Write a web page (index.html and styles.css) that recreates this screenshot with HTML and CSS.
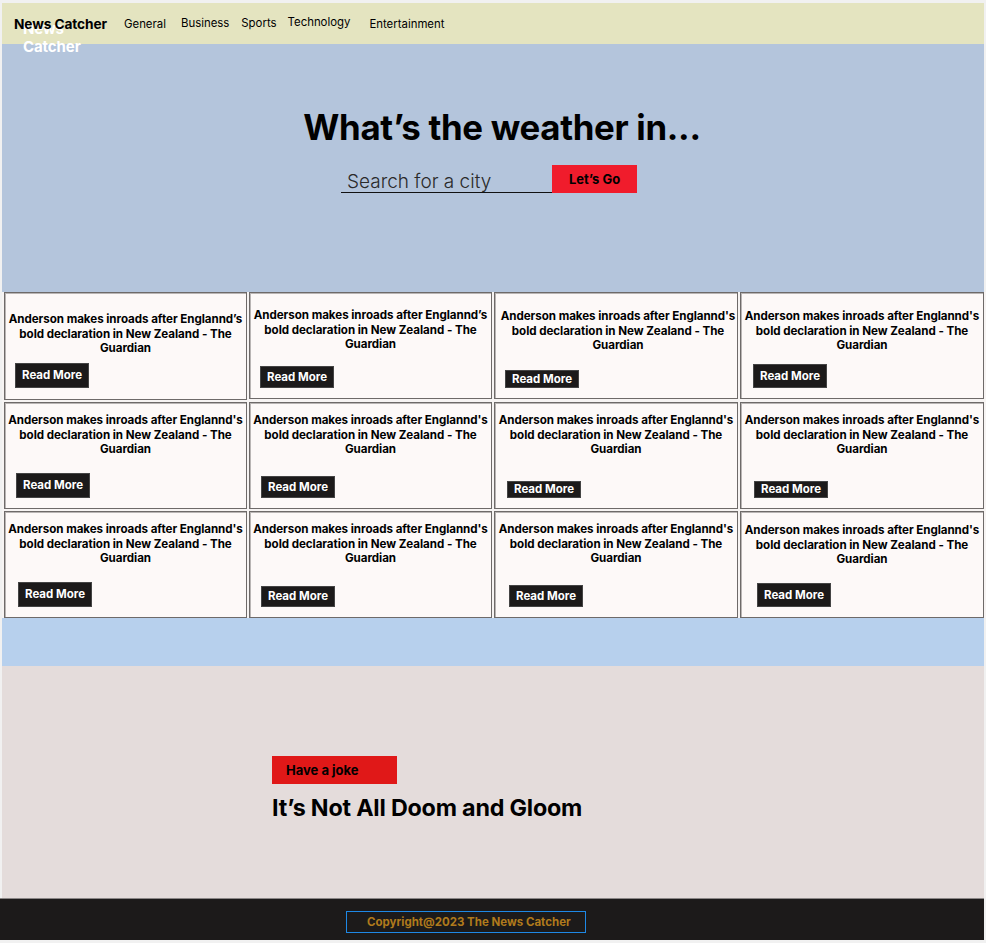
FILE: index.html
```html
<!DOCTYPE html>
<html lang="en">
<head>
<meta charset="utf-8">
<title>News Catcher</title>
<link rel="stylesheet" href="styles.css">
</head>
<body>
<div class="page">
  <header class="nav">
    <div class="brand">News Catcher<span class="brand-ghost">News<br>Catcher</span></div>
    <a class="link l-general">General</a>
    <a class="link l-business">Business</a>
    <a class="link l-sports">Sports</a>
    <a class="link l-tech">Technology</a>
    <a class="link l-ent">Entertainment</a>
  </header>

  <section class="hero">
    <h1 class="hero-title">What’s the weather in...</h1>
    <div class="search">
      <input class="search-input" type="text" placeholder="Search for a city">
      <button class="go-btn">Let’s Go</button>
    </div>
  </section>

  <section class="cards">
    <div class="card c1"><p class="card-title">Anderson makes inroads after Englannd’s bold declaration in New Zealand - The Guardian</p><button class="read">Read More</button></div>
    <div class="card c2"><p class="card-title">Anderson makes inroads after Englannd’s bold declaration in New Zealand - The Guardian</p><button class="read">Read More</button></div>
    <div class="card c3"><p class="card-title">Anderson makes inroads after Englannd's bold declaration in New Zealand - The Guardian</p><button class="read">Read More</button></div>
    <div class="card c4"><p class="card-title">Anderson makes inroads after Englannd's bold declaration in New Zealand - The Guardian</p><button class="read">Read More</button></div>

    <div class="card c5"><p class="card-title">Anderson makes inroads after Englannd's bold declaration in New Zealand - The Guardian</p><button class="read">Read More</button></div>
    <div class="card c6"><p class="card-title">Anderson makes inroads after Englannd's bold declaration in New Zealand - The Guardian</p><button class="read">Read More</button></div>
    <div class="card c7"><p class="card-title">Anderson makes inroads after Englannd's bold declaration in New Zealand - The Guardian</p><button class="read">Read More</button></div>
    <div class="card c8"><p class="card-title">Anderson makes inroads after Englannd's bold declaration in New Zealand - The Guardian</p><button class="read">Read More</button></div>

    <div class="card c9"><p class="card-title">Anderson makes inroads after Englannd's bold declaration in New Zealand - The Guardian</p><button class="read">Read More</button></div>
    <div class="card c10"><p class="card-title">Anderson makes inroads after Englannd's bold declaration in New Zealand - The Guardian</p><button class="read">Read More</button></div>
    <div class="card c11"><p class="card-title">Anderson makes inroads after Englannd's bold declaration in New Zealand - The Guardian</p><button class="read">Read More</button></div>
    <div class="card c12"><p class="card-title">Anderson makes inroads after Englannd's bold declaration in New Zealand - The Guardian</p><button class="read">Read More</button></div>
  </section>

  <div class="band"></div>

  <section class="joke">
    <div class="joke-inner">
      <button class="joke-btn">Have a joke</button>
      <h2 class="joke-title">It’s Not All Doom and Gloom</h2>
    </div>
  </section>

  <footer class="footer">
    <div class="copy">Copyright@2023 The News Catcher</div>
  </footer>
</div>
</body>
</html>
```

FILE: styles.css
```css
* { box-sizing: border-box; }

html, body {
  margin: 0;
  padding: 0;
  background: #f1f1f1;
}

body {
  padding: 3px 2px 0 2px;
  font-family: Inter, "Noto Sans", sans-serif;
  color: #000;
}

.page {
  width: 982px;
  display: flex;
  flex-direction: column;
}

/* NAV */
.nav {
  height: 41px;
  background: #e4e4c0;
  display: flex;
  align-items: center;
  position: relative;
  z-index: 2;
  padding-left: 12px;
}

.brand {
  position: relative;
  font-weight: 700;
  font-size: 13.7px;
  letter-spacing: -0.1px;
  margin-right: 17px;
  z-index: 1;
}

.brand-ghost {
  position: absolute;
  left: 9px;
  top: 4px;
  color: #fff;
  font-size: 15px;
  line-height: 18px;
  font-weight: 700;
  z-index: -1;
  white-space: nowrap;
}

.link {
  font-size: 11.4px;
  color: #000;
  text-decoration: none;
  display: inline-block;
}

.l-general { margin-right: 15px; margin-top: 1px; }
.l-business { margin-right: 12px; margin-top: -1px; }
.l-sports { margin-right: 11px; margin-top: -1px; }
.l-tech { margin-right: 19px; margin-top: -3px; }
.l-ent { margin-top: 1px; }

/* HERO */
.hero {
  height: 248px;
  background: #b4c5dc;
  display: flex;
  flex-direction: column;
  align-items: center;
  padding-top: 62px;
}

.hero-title {
  margin: 0 0 0 18px;
  font-size: 34.8px;
  font-weight: 700;
  letter-spacing: -0.3px;
  line-height: 42px;
}

.search {
  display: flex;
  align-items: flex-end;
  margin-top: 17px;
  margin-left: -8px;
}

.search-input {
  width: 211px;
  height: 28px;
  border: none;
  border-bottom: 1px solid #111;
  background: transparent;
  font-family: Inter, sans-serif;
  font-weight: 300;
  font-size: 19px;
  padding: 5px 0 0 6px;
  outline: none;
  line-height: 22px;
}

.search-input::placeholder {
  color: #2a2a2a;
  opacity: 1;
}

.go-btn {
  width: 85px;
  height: 28px;
  background: #f01c2c;
  border: none;
  font-family: Inter, sans-serif;
  font-weight: 700;
  font-size: 13px;
  color: #000;
  padding: 0;
}

/* CARDS */
.cards {
  display: grid;
  grid-template-columns: 243px 243px 244px 244px;
  column-gap: 2px;
  row-gap: 2px;
  padding: 0 0 0 2px;
  background: #f7f4f3;
  width: 984px;
}

.card {
  background: #fdf9f8;
  border: 1px solid #6e6a69;
  box-shadow: inset 1px 1px 0 #b9b5b4;
  display: flex;
  flex-direction: column;
  align-items: flex-start;
  padding: 0 2px 10px 2px;
  height: 107px;
}

.card-title {
  margin: 20px 0 0 0;
  width: 100%;
  text-align: center;
  font-weight: 700;
  font-size: 11.6px;
  line-height: 14.5px;
  letter-spacing: -0.05px;
}

.read {
  margin-top: 9px;
  margin-left: 8px;
  width: 74px;
  height: 25px;
  background: #1c1a1a;
  border: 1px solid #444;
  color: #fff;
  font-family: Inter, sans-serif;
  font-weight: 700;
  font-size: 11.5px;
  padding: 0;
}

.c1 { height: 108px; }
.c1 .card-title { margin-top: 19px; }
.c1 .read { margin-top: 7px; }
.c2 .card-title { margin-top: 15px; }
.c2 .read { margin-top: 14px; }
.c3 .card-title { margin-top: 16px; margin-left: 2px; }
.c3 .read { margin-top: 17px; }
.c4 .card-title { margin-top: 16px; }
.c4 .read { margin-top: 11px; margin-left: 10px; }
.c5 .card-title { margin-top: 10px; }
.c5 .read { margin-top: 16px; margin-left: 9px; }
.c6 .card-title { margin-top: 10px; }
.c6 .read { margin-top: 19px; margin-left: 9px; }
.c7 .card-title { margin-top: 10px; }
.c7 .read { margin-top: 24px; margin-left: 10px; }
.c8 .card-title { margin-top: 10px; }
.c8 .read { margin-top: 24px; margin-left: 11px; }
.c9 .card-title { margin-top: 10px; }
.c9 .read { margin-top: 16px; margin-left: 11px; }
.c10 .card-title { margin-top: 10px; }
.c10 .read { margin-top: 20px; margin-left: 9px; }
.c11 .card-title { margin-top: 10px; }
.c11 .read { margin-top: 19px; margin-left: 12px; }
.c12 .card-title { margin-top: 11px; }
.c12 .read { margin-top: 16px; margin-left: 14px; }

/* BAND */
.band {
  height: 48px;
  background: #b7d0ed;
}

/* JOKE */
.joke {
  height: 232px;
  background: #e4dcdb;
  padding: 90px 0 0 270px;
}

.joke-inner {
  display: flex;
  flex-direction: column;
  align-items: flex-start;
}

.joke-btn {
  width: 125px;
  height: 28px;
  background: #e01818;
  border: none;
  text-align: left;
  padding: 0 0 0 14px;
  font-family: Inter, sans-serif;
  font-weight: 700;
  font-size: 13px;
  color: #000;
}

.joke-title {
  margin: 10px 0 0 0;
  font-size: 23.3px;
  font-weight: 700;
  line-height: 28px;
  letter-spacing: -0.2px;
}

/* FOOTER */
.footer {
  height: 42px;
  background: #1c1a1a;
  padding: 12px 0 0 346px;
  border-top: 1px solid #8a8686;
  width: 984px;
  margin-left: -2px;
}

.copy {
  width: 240px;
  height: 22px;
  border: 1px solid #1e88e5;
  color: #b07a1c;
  font-weight: 700;
  font-size: 11.5px;
  padding: 3px 0 0 20px;
}
```
